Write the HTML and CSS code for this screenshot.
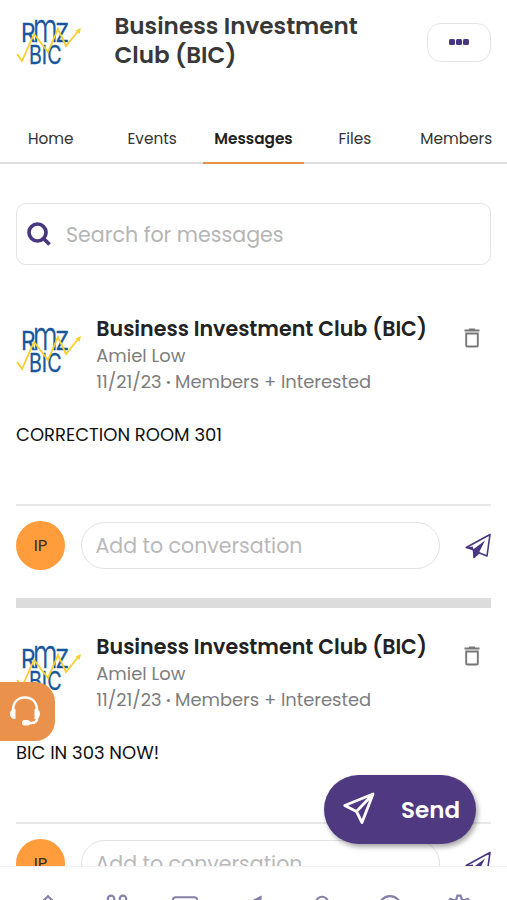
FILE: index.html
```html
<!DOCTYPE html>
<html lang="en">
<head>
<meta charset="utf-8">
<title>Business Investment Club (BIC)</title>
<link rel="stylesheet" href="styles.css">
</head>
<body>
<svg class="defs" aria-hidden="true">
  <symbol id="logo" viewBox="0 0 66 66" overflow="visible">
    <g class="logo-letters">
      <text x="5" y="32" font-size="25" textLength="14.500" lengthAdjust="spacingAndGlyphs">R</text>
      <text class="thin" x="16.800" y="31.800" font-size="40" textLength="25" lengthAdjust="spacingAndGlyphs">m</text>
      <text x="39.500" y="32" font-size="25" textLength="13.500" lengthAdjust="spacingAndGlyphs">Z</text>
      <text x="13" y="54" font-size="25" textLength="32.500" lengthAdjust="spacingAndGlyphs">BIC</text>
    </g>
    <path d="M1 44l5 7 12-27 14 18 10-23 8 17 13-16" fill="none" stroke="#f8cf2c" stroke-width="1.800"/>
    <path d="M65 18l-5.500 2.500 4 3.500z" fill="#f8cf2c"/>
  </symbol>
  <symbol id="trash" viewBox="0 0 16 20">
    <path d="M2.200 5.500h11.600V17.500q0 1-1 1H3.200q-1 0-1-1zM.5 2.500h15M5 1.400h6" fill="none" stroke="currentColor" stroke-width="1.900"/>
  </symbol>
  <symbol id="reply" viewBox="0 0 26 26">
    <path d="M1.200 14.500L25 1.500l-3 21.500-8-3.200-5 4.700-.5-8z" fill="none" stroke="currentColor" stroke-width="1.600" stroke-linejoin="round"/>
    <path d="M8 16.500L20 7.500 14 19.500l-5 5.500zM1 14.500l7-1v4z" fill="currentColor"/>
  </symbol>
</svg>
<div class="app">
  <header class="header">
    <svg class="logo"><use href="#logo"/></svg>
    <h1 class="title">Business Investment<br>Club (BIC)</h1>
    <button class="more" aria-label="More"><i></i><i></i><i></i></button>
  </header>
  <nav class="tabs">
    <a class="tab">Home</a><a class="tab">Events</a><a class="tab active">Messages</a><a class="tab">Files</a><a class="tab">Members</a>
  </nav>
  <main class="content">
    <div class="search">
      <svg viewBox="0 0 24 24" width="24" height="24"><circle cx="10.500" cy="10.500" r="8.500"/><path d="M16.500 16.500l6 6"/></svg>
      <span>Search for messages</span>
    </div>
    <article class="message">
      <div class="message-head">
        <svg class="logo"><use href="#logo"/></svg>
        <div class="info">
          <h2>Business Investment Club (BIC)</h2>
          <p>Amiel Low</p>
          <p>11/21/23<b>•</b>Members + Interested</p>
        </div>
        <svg class="trash"><use href="#trash"/></svg>
      </div>
      <p class="text">CORRECTION ROOM 301</p>
      <div class="reply">
        <span class="avatar">IP</span>
        <div class="field">Add to conversation</div>
        <svg class="reply-icon"><use href="#reply"/></svg>
      </div>
    </article>
    <article class="message">
      <div class="message-head">
        <svg class="logo"><use href="#logo"/></svg>
        <div class="info">
          <h2>Business Investment Club (BIC)</h2>
          <p>Amiel Low</p>
          <p>11/21/23<b>•</b>Members + Interested</p>
        </div>
        <svg class="trash"><use href="#trash"/></svg>
      </div>
      <p class="text">BIC IN 303 NOW!</p>
      <div class="reply">
        <span class="avatar">IP</span>
        <div class="field">Add to conversation</div>
        <svg class="reply-icon"><use href="#reply"/></svg>
      </div>
    </article>
  </main>
  <footer class="bottom-nav">
    <svg viewBox="0 0 24 24"><path d="M2 12L12 2l10 10v10H2z"/></svg>
    <svg viewBox="0 0 24 24"><circle cx="6.500" cy="4.500" r="3"/><circle cx="17.500" cy="4.500" r="3"/><path d="M1 16q0-6 5-6t5.500 6q0-6 6-6t6 6"/></svg>
    <svg viewBox="0 0 24 24"><rect x=".5" y="3" width="23" height="19" rx="3"/></svg>
    <svg viewBox="0 0 24 24"><path d="M1 12L19 3l-2 18-6-4-5 4v-7z"/><path class="solid" d="M6 11L19 3l-3 5-5 4z"/></svg>
    <svg viewBox="0 0 24 24"><circle cx="12" cy="8" r="5.500"/><path d="M2 23q0-9 10-9t10 9"/></svg>
    <svg viewBox="0 0 24 24"><circle cx="12" cy="12" r="10"/></svg>
    <svg viewBox="0 0 24 24"><path d="M10.500 1.500h3l1 3.500 2 1 3.500-1.500 2 2.500-2 3 .5 2 2.500 2v3h-22v-3l2.500-2 .5-2-2-3L4 4.500 7.500 6l2-1z"/></svg>
  </footer>
  <button class="support" aria-label="Support">
    <svg viewBox="0 0 32 32" width="32" height="32"><path class="line" d="M4 16C4 7 9 2.500 16 2.500S28 7 28 16M28 20v3.500q0 4.500-6 4.500h-4"/><path d="M6.500 14v10Q1 24 1 19t5.500-5zM25.500 14v10q5.500 0 5.500-5t-5.500-5z"/><rect x="13" y="25" width="8" height="5.500" rx="2.500"/></svg>
  </button>
  <button class="send">
    <svg viewBox="0 0 32 32" width="32" height="32"><path d="M1.800 13.500L30 2 19 30.500l-5.500-11zM13.500 19.500L30 2"/></svg>
    <span>Send</span>
  </button>
</div>
</body>
</html>
```
FILE: styles.css
```css
* { box-sizing: border-box; }
body { margin: 0; background: #fff; font-family: Poppins, Inter, "Open Sans", sans-serif; color: #222; }
h1, h2, p { margin: 0; white-space: nowrap; }
button { border: 0; padding: 0; font-family: inherit; }
.defs { position: absolute; width: 0; height: 0; }
.app { position: relative; width: 507px; height: 900px; overflow: hidden; display: flex; flex-direction: column; }
.logo { width: 66px; height: 66px; flex: none; overflow: visible; }
.logo-letters { fill: #17569b; stroke: #17569b; stroke-width: .3; font-family: Inter, sans-serif; font-weight: 400; }
.logo-letters .thin { stroke-width: .3; font-weight: 300; }

.header { display: flex; height: 114px; padding: 10px 16px 0; flex: none; }
.title { flex: 1; padding-top: 2px; margin-left: 32.500px; font-size: 23.100px; line-height: 29px; font-weight: 600; color: #383838; }
.more { width: 64px; height: 39px; margin-top: 13px; border: 1px solid #e4e4e4; border-radius: 14px; background: #fff; display: flex; align-items: center; justify-content: center; gap: 1.500px; padding-bottom: 1px; }
.more i { width: 5.500px; height: 5.500px; border-radius: 1.500px; background: #493681; }

.tabs { display: flex; height: 50px; border-bottom: 2px solid #dedede; flex: none; }
.tab { flex: 1; height: 50px; line-height: 49px; text-align: center; font-size: 15.300px; color: #333; }
.tab.active { font-weight: 600; color: #222; border-bottom: 2px solid #ec914b; }

.content { flex: 1; min-height: 0; overflow: hidden; padding: 39px 16px 0; }
.search { height: 62px; display: flex; align-items: center; padding-left: 9.500px; border: 1.500px solid #e3e3e3; border-radius: 10px; font-size: 20.600px; color: #b5b5b5; }
.search svg { fill: none; stroke: #493681; stroke-width: 3.700; margin-right: 15.500px; }
.message { height: 318px; }
.search + .message { margin-top: 43px; height: 300px; border-bottom: 10px solid #dcdcdc; }
.message + .message { margin-top: 18px; }
.message-head { display: flex; padding-top: 6px; height: 90px; }
.message .logo { margin-top: 4px; }
.info { flex: 1; margin-left: 14.300px; }
.info h2 { font-size: 20.600px; font-weight: 600; line-height: 30px; color: #222; }
.info p { font-size: 17.900px; line-height: 26px; color: #7d7d7d; }
.info b { font-size: 13px; font-weight: 400; margin: 0 4px; vertical-align: 1px; line-height: 1; }
.info h2 + p { margin-top: -1px; }
.trash { width: 16px; height: 20px; margin: 14px 11px 0 0; color: #777; }
.text { height: 106px; padding-top: 24px; font-size: 18px; line-height: 26px; color: #111; }
.reply { display: flex; align-items: center; height: 83px; border-top: 2px solid #e8e8e8; padding-bottom: 2px; }
.avatar { width: 49px; height: 49px; border-radius: 50%; background: #ff9c3c; display: flex; align-items: center; justify-content: center; font-size: 16.500px; color: #3b2a20; }
.field { width: 359px; height: 47px; margin-left: 16px; padding-left: 13.500px; border: 1.500px solid #e2e2e2; border-radius: 24px; line-height: 46px; font-size: 20.500px; color: #b9b9b9; white-space: nowrap; }
.reply-icon { width: 26px; height: 26px; margin-left: 25px; color: #493681; }

.bottom-nav { height: 34px; flex: none; overflow: hidden; border-top: 1px solid #f2f2f2; padding: 27px 14px 0; display: flex; align-items: flex-start; justify-content: space-around; }
.bottom-nav svg { width: 26px; height: 26px; fill: none; stroke: #8580ac; stroke-width: 2; flex: none; }
.bottom-nav .solid { fill: #8580ac; }

.support { position: absolute; left: 0; top: 682px; width: 55px; height: 59px; border-radius: 0 20px 20px 0; background: #ea924c; }
.support svg { display: block; margin-left: 9px; margin-top: -2px; fill: #fff; }
.support .line { fill: none; stroke: #fff; stroke-width: 2.600; }
.send { position: absolute; left: 324px; top: 775px; width: 152px; height: 69px; border-radius: 35px; background: #4f3981; color: #fff; display: flex; align-items: center; padding-left: 19px; font-size: 23px; font-weight: 600; box-shadow: 2px 3px 5px rgba(0,0,0,.35); }
.send svg { fill: none; stroke: #fff; stroke-width: 2.800; stroke-linejoin: round; margin: -3px 26px 0 0; }
```
